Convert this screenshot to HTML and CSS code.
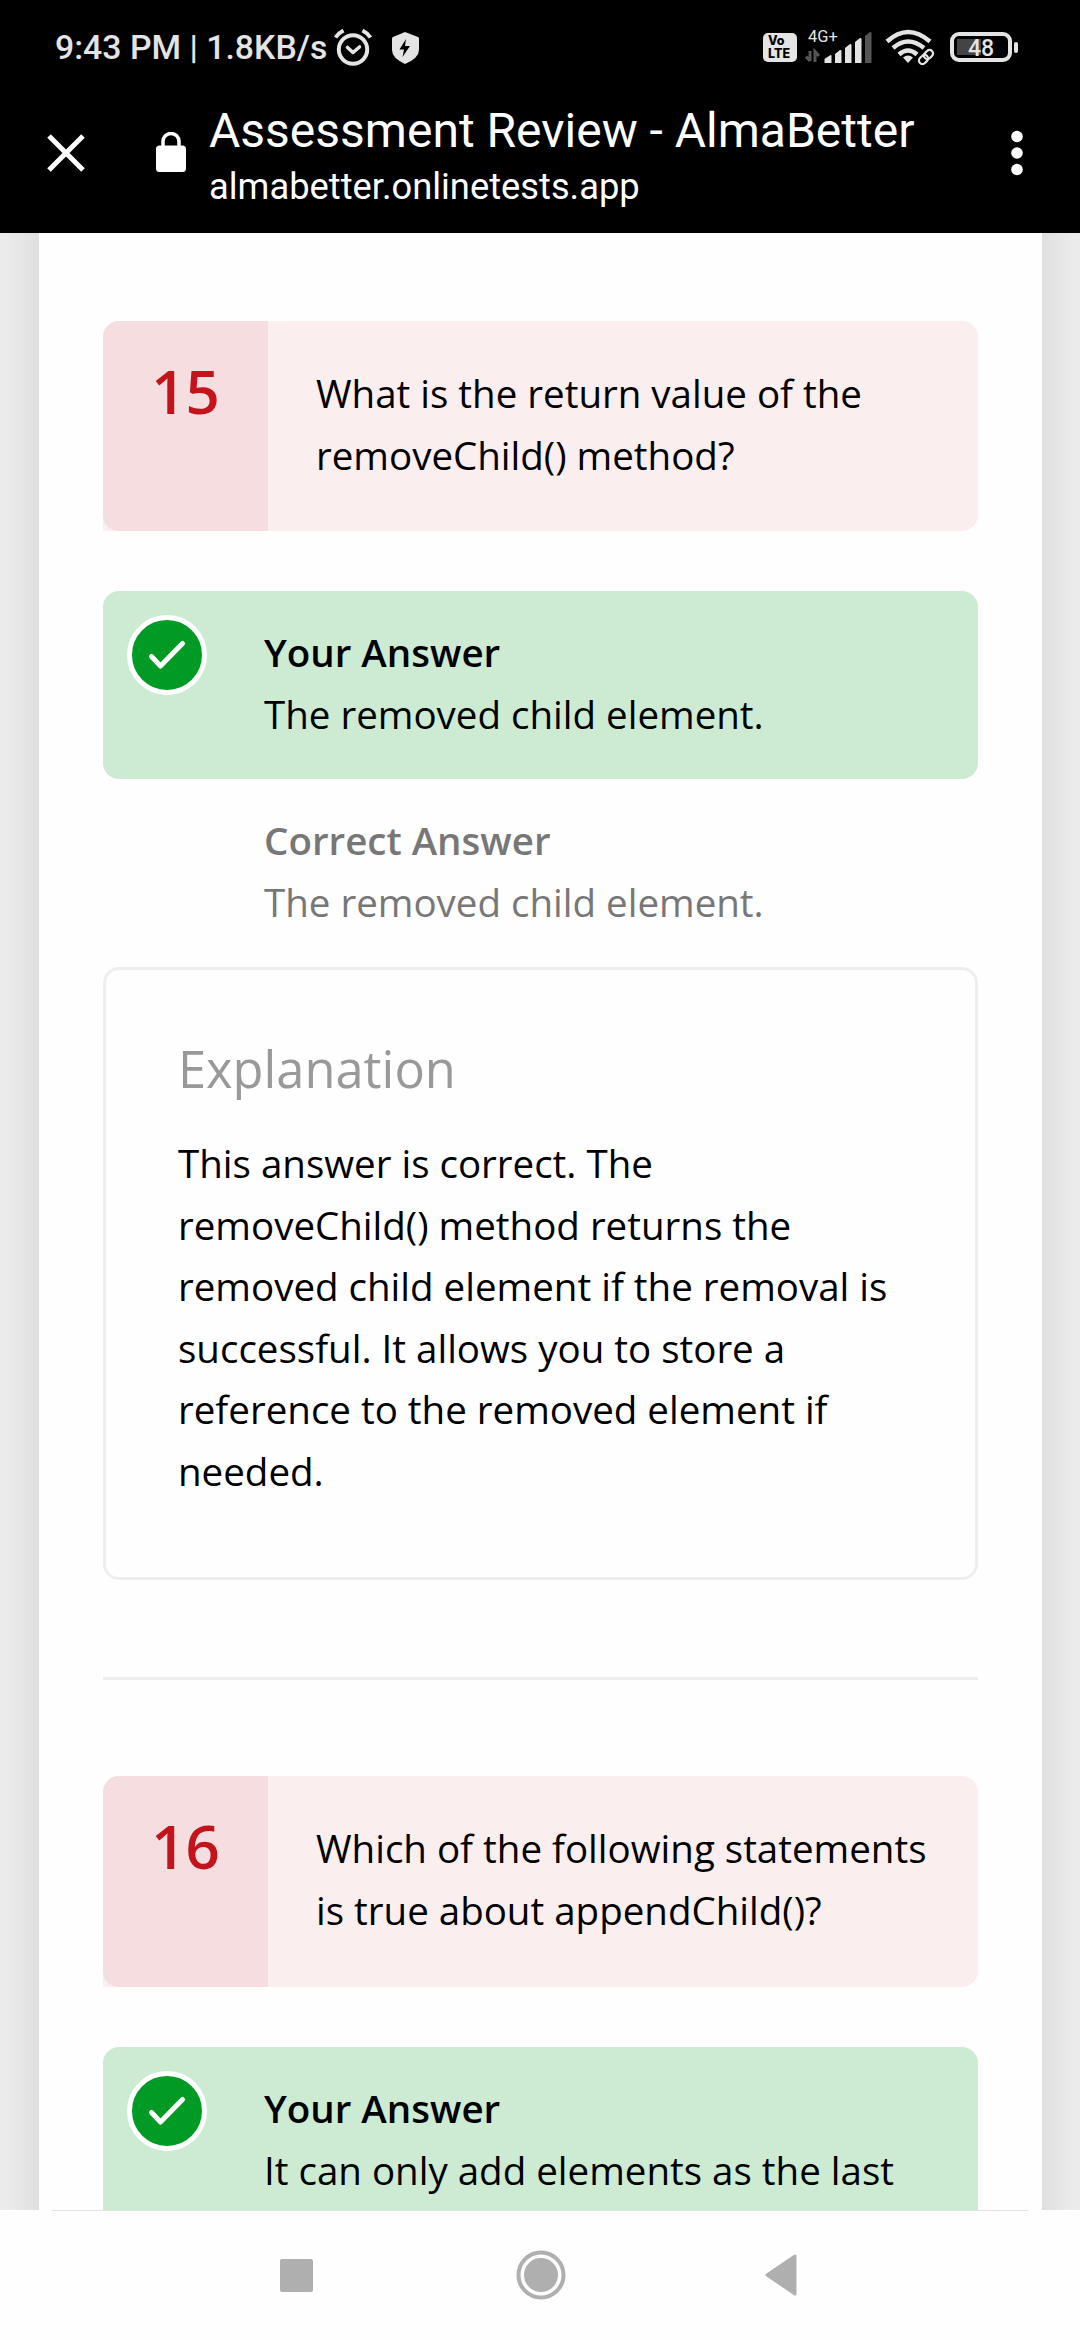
FILE: index.html
```html
<!DOCTYPE html>
<html lang="en">
<head>
<meta charset="utf-8">
<title>Assessment Review - AlmaBetter</title>
<link rel="stylesheet" href="styles.css">
</head>
<body>
<header class="top">
  <div class="status">
    <span class="clock">9:43 PM | 1.8KB/s</span>
    <svg class="alarm" width="40" height="40" viewBox="0 0 40 40" fill="none" stroke="#e4e4e4"><circle cx="20" cy="21.5" r="14.2" stroke-width="4"/><path d="M14.5 19.5l5.5 5 6.5-5.5" stroke-width="3.6" stroke-linecap="round" stroke-linejoin="round"/><path d="M2.5 9.5q3-4.500 8-7M37.500 9.500q-3-4.500-8-7" stroke-width="4"/></svg>
    <svg class="shield" width="28" height="34" viewBox="0 0 28 34"><path d="M14 1l13 5q1 0 1 2v11q0 8-14 14Q1 27 1 19V8q0-2 1-2z" fill="#e4e4e4"/><path d="M15 8L8.500 18.500h4.500L11.500 26 19 15h-5z" fill="#000"/></svg>
    <span class="spacer"></span>
    <span class="volte"><span>Vo</span><span>LTE</span></span>
    <span class="signal">
      <span class="net">4G+</span>
      <svg width="68" height="31" viewBox="0 0 68 31"><g fill="#e4e4e4"><path d="M19.500 31v-4l6-4q1 0 1 1v7z"/><path d="M30 31V22l5-4q1.500 0 1.500 1v12zM40 31V16l5-4q1.500 0 1.500 1v18zM50 31V10l5-4q1.500 0 1.500 1v24z"/></g><path d="M60 31V4l5-4q1.500 0 1.500 1v30z" fill="#555"/><path d="M5 19v10M1 24.500l4 4.500M10 30V19.500l4 4.500" fill="none" stroke="#555" stroke-width="3"/></svg>
    </span>
    <svg class="wifi" width="50" height="36" viewBox="0 0 50 36" fill="none" stroke="#e4e4e4"><path d="M2 12.500q21-19 43 0M8 19q15-13 31 0M14 25.500q9-8 18 0" stroke-width="4.500"/><path d="M18 28.500q5-4 10 0l-5 5.500z" fill="#e4e4e4" stroke="none"/><g stroke="#000" stroke-width="6"><path d="M40 26l-4.500 4.500"/></g><g stroke-width="2.200" transform="rotate(-45 41 28)"><rect x="32.500" y="24.500" width="10" height="7" rx="3.500"/><rect x="39.500" y="24.500" width="10" height="7" rx="3.500"/></g></svg>
    <span class="battery"><span class="cell"><span>48</span></span><span class="tip"></span></span>
  </div>
  <div class="bar">
    <svg class="close" width="38" height="40" viewBox="0 0 38 40"><path d="M2 3l34 34M36 3L2 37" stroke="#fff" stroke-width="5"/></svg>
    <svg class="lock" width="30" height="40" viewBox="0 0 30 40"><rect y="13.500" width="30" height="26.500" rx="3.500" fill="#fff"/><path d="M7 15V9.500a8 8 0 0 1 16 0V15" fill="none" stroke="#fff" stroke-width="3.500"/></svg>
    <div class="site"><div class="title"><span>Assessment Review - AlmaBetter</span></div><div class="url"><span>almabetter.onlinetests.app</span></div></div>
    <svg class="dots" width="12" height="46" viewBox="0 0 12 46" fill="#fff"><circle cx="6" cy="6.500" r="5.800"/><circle cx="6" cy="23" r="5.800"/><circle cx="6" cy="39.500" r="5.800"/></svg>
  </div>
</header>
<div class="page">
  <main class="sheet">
    <section class="item">
      <div class="question"><div class="number">15</div><p>What is the return value of the<br>removeChild() method?</p></div>
      <div class="answer correct">
        <svg class="badge" width="80" height="80" viewBox="0 0 80 80"><circle cx="40" cy="40" r="37.500" fill="#019a25" stroke="#fff" stroke-width="5"/><path d="M24.500 41.500l9 9.500 22-22.500" fill="none" stroke="#fff" stroke-width="5" stroke-linecap="round" stroke-linejoin="round"/></svg>
        <div><h3>Your Answer</h3><p>The removed child element.</p></div>
      </div>
      <div class="answer expected"><div><h3>Correct Answer</h3><p>The removed child element.</p></div></div>
      <div class="explanation"><h2>Explanation</h2><p>This answer is correct. The<br>removeChild() method returns the<br>removed child element if the removal is<br>successful. It allows you to store a<br>reference to the removed element if<br>needed.</p></div>
    </section>
    <hr>
    <section class="item">
      <div class="question"><div class="number">16</div><p>Which of the following statements<br>is true about appendChild()?</p></div>
      <div class="answer correct">
        <svg class="badge" width="80" height="80" viewBox="0 0 80 80"><circle cx="40" cy="40" r="37.500" fill="#019a25" stroke="#fff" stroke-width="5"/><path d="M24.500 41.500l9 9.500 22-22.500" fill="none" stroke="#fff" stroke-width="5" stroke-linecap="round" stroke-linejoin="round"/></svg>
        <div><h3>Your Answer</h3><p>It can only add elements as the last</p></div>
      </div>
    </section>
  </main>
</div>
<nav class="system">
  <svg width="33" height="33" viewBox="0 0 33 33"><rect width="33" height="33" rx="2" fill="#afafaf"/></svg>
  <svg width="50" height="50" viewBox="0 0 50 50"><circle cx="25" cy="25" r="22.500" fill="none" stroke="#afafaf" stroke-width="4"/><circle cx="25" cy="25" r="17" fill="#afafaf"/></svg>
  <svg class="back" width="32" height="42" viewBox="0 0 32 42"><path d="M30 2v38L2 21z" fill="#afafaf" stroke="#afafaf" stroke-width="3" stroke-linejoin="round"/></svg>
</nav>
</body>
</html>
```
FILE: styles.css
```css
* { box-sizing: border-box; }
body { margin: 0; width: 1080px; height: 2340px; overflow: hidden; display: flex; flex-direction: column; background: #fefefe; font-family: "Open Sans", sans-serif; font-size: 38.5px; line-height: 61.6px; color: #000; }
h2, h3, p { margin: 0; font-size: inherit; white-space: nowrap; }
svg { display: block; flex: none; }

.top { flex: none; height: 233px; background: #000; color: #fff; font-family: Roboto, sans-serif; }
.status { display: flex; align-items: flex-start; height: 96px; padding: 28px 62px 0 55px; color: #e4e4e4; }
.clock { width: 273px; font-size: 33.8px; line-height: 40px; font-weight: 500; white-space: nowrap; }
.alarm { margin-left: 5px; }
.shield { margin: 3px 0 0 18px; }
.spacer { flex: 1; }
.volte { display: flex; flex-direction: column; width: 34px; height: 29px; margin-top: 5px; padding: 1px 0 0 5px; border-radius: 5px; background: #e4e4e4; color: #000; font: 800 12.5px/13px Inter, sans-serif; }
.signal { display: flex; flex-direction: column; width: 68px; height: 36px; margin-left: 8px; position: relative; }
.signal svg { margin-top: 4px; }
.net { position: absolute; left: 3px; top: 0; font-size: 16.5px; line-height: 17px; }
.wifi { margin: 1px 0 0 12px; }
.battery { display: flex; align-items: center; gap: 2px; margin: 4px 0 0 15px; }
.cell { display: flex; align-items: center; justify-content: center; width: 62px; height: 30px; border: 4px solid #e4e4e4; border-radius: 9px; background: linear-gradient(#444, #444) 3px 3px / 24px 16px no-repeat; font-size: 23px; line-height: 23px; font-weight: 500; }
.cell span { padding-top: 2px; }
.tip { width: 4px; height: 11px; border-radius: 2px; background: #e4e4e4; }
.bar { display: flex; align-items: flex-start; padding-left: 47px; }
.close { margin-top: 37px; }
.lock { margin: 36px 0 0 71px; }
.site { width: 802px; margin: 5px 0 0 23px; }
.title { font-size: 48px; line-height: 60px; white-space: nowrap; }
.url { padding-top: 1px; font-size: 36.3px; line-height: 50px; }
.dots { margin-top: 34px; }

.page { flex: none; height: 1977px; padding: 0 38px 0 39px; overflow: hidden; background: #eee; }
.sheet { height: 2177px; margin-top: -100px; padding: 188px 64px 0; background: #fefefe; box-shadow: 0 0 55px rgba(0, 0, 0, .12); }
.question { display: flex; height: 210px; margin-bottom: 60px; border-radius: 16px 16px 16px 0; background: #faeeee; }
.number { width: 165px; padding-top: 29px; border-radius: 16px 0 0 16px; background: #f6dee0; color: #c4141b; font-size: 60px; line-height: 82px; font-weight: 600; text-align: center; }
.question p { padding: 42px 0 0 48px; }
hr + .item .question { height: 211px; }
.answer { display: flex; height: 188px; padding-top: 31px; }
.correct { padding-left: 24px; border-radius: 16px; background: #cdebd3; }
.badge { margin: -7px 57px 0 0; }
.expected { padding-left: 161px; color: #777; }
h3 { font-weight: 600; }
.explanation { height: 613px; padding: 69px 72px 0; border: 3px solid #eee; border-radius: 16px; }
.explanation h2 { margin-bottom: 34px; color: #999; font-size: 50.6px; line-height: 60px; font-weight: 400; }
hr { height: 3px; margin: 97px 0 96px; border: 0; background: #eee; }

.system { flex: none; display: grid; grid-template-columns: 33px 50px 32px; column-gap: 203px; align-items: center; height: 130px; padding-left: 279.5px; background: linear-gradient(#e2e2e2, #e2e2e2) 52px 0 / 976px 1px no-repeat; }
.back { margin-left: -4px; }
```
